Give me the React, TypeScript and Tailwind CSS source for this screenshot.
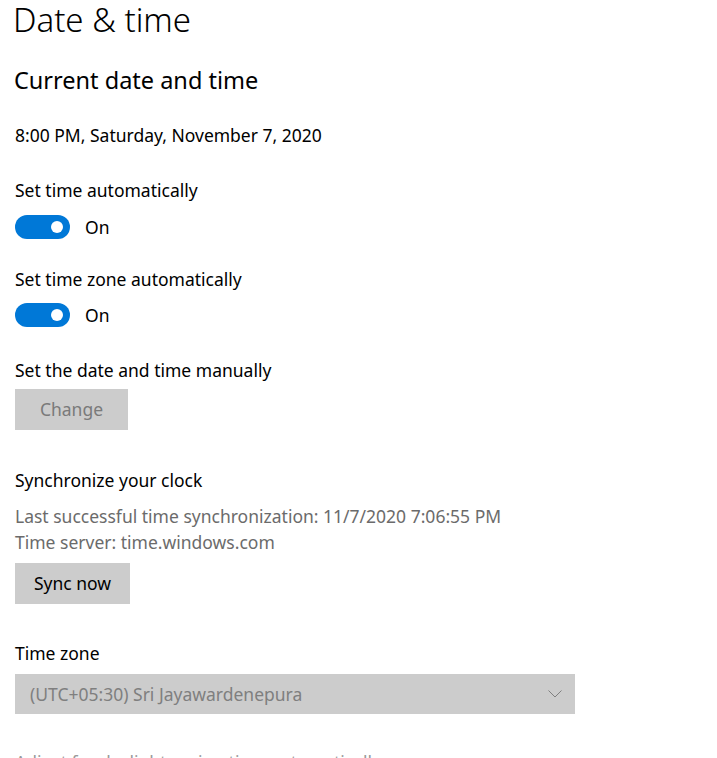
function Toggle() {
    return (
        <div className="flex items-center gap-[15px] h-[24px]">
            <div className="w-[55px] h-[24px] rounded-full bg-[#0078d7] flex items-center justify-end pr-[7px]">
                <div className="w-[12px] h-[12px] rounded-full bg-white" />
            </div>
            <span className="text-[17.5px] leading-[24px]">On</span>
        </div>
    )
}

function App() {
    return (
        <main className="w-[717px] h-[758px] overflow-hidden bg-white text-black pl-[15px] font-['Noto_Sans',sans-serif] text-[17.5px]">
            <h1 className="text-[33px] font-light leading-[46px] -mt-[3px] -ml-[2px]">Date &amp; time</h1>
            <h2 className="text-[23.5px] leading-[30px] mt-[22px] -ml-[1px]">Current date and time</h2>
            <p className="leading-[24px] mt-[28px]">8:00 PM, Saturday, November 7, 2020</p>

            <p className="leading-[24px] mt-[31px]">Set time automatically</p>
            <div className="mt-[13px]"><Toggle /></div>

            <p className="leading-[24px] mt-[28px]">Set time zone automatically</p>
            <div className="mt-[12px]"><Toggle /></div>

            <p className="leading-[24px] mt-[31px]">Set the date and time manually</p>
            <button className="block mt-[7px] w-[113px] h-[41px] bg-[#cccccc] text-[#7a7a7a]">Change</button>

            <p className="leading-[24px] mt-[38px]">Synchronize your clock</p>
            <div className="mt-[11px] leading-[26px] text-[#6b6b6b]">
                <p>Last successful time synchronization: 11/7/2020 7:06:55 PM</p>
                <p>Time server: time.windows.com</p>
            </div>
            <button className="block mt-[8px] w-[115px] h-[41px] bg-[#cccccc] text-black">Sync now</button>

            <p className="leading-[24px] mt-[37px]">Time zone</p>
            <div className="mt-[9px] w-[560px] h-[40px] bg-[#cccccc] flex items-center justify-between pl-[15px] pr-[13px] text-[#7f7f7f]">
                <span>(UTC+05:30) Sri Jayawardenepura</span>
                <svg width="14" height="8" viewBox="0 0 14 8" fill="none" stroke="#7f7f7f" strokeWidth="1">
                    <polyline points="0.5,0.5 7,7 13.5,0.5" />
                </svg>
            </div>

            <p className="leading-[24px] mt-[36px] text-[#9a9a9a]">Adjust for daylight saving time automatically</p>
        </main>
    )
}

export default App
